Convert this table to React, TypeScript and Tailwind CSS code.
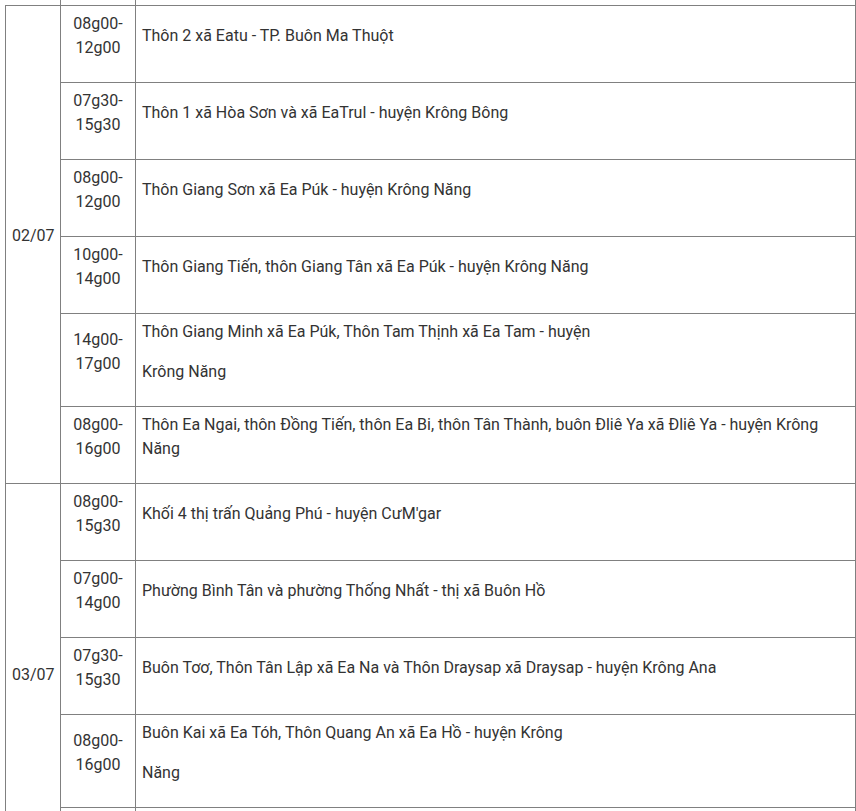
import React from "react";

type Row = { time: [string, string] | null; content: string[][] };

const group1: Row[] = [
  { time: ["08g00-", "12g00"], content: [["Thôn 2 xã Eatu - TP. Buôn Ma Thuột"]] },
  { time: ["07g30-", "15g30"], content: [["Thôn 1 xã Hòa Sơn và xã EaTrul - huyện Krông Bông"]] },
  { time: ["08g00-", "12g00"], content: [["Thôn Giang Sơn xã Ea Púk - huyện Krông Năng"]] },
  { time: ["10g00-", "14g00"], content: [["Thôn Giang Tiến, thôn Giang Tân xã Ea Púk - huyện Krông Năng"]] },
  {
    time: ["14g00-", "17g00"],
    content: [["Thôn Giang Minh xã Ea Púk, Thôn Tam Thịnh xã Ea Tam - huyện"], ["Krông Năng"]],
  },
  {
    time: ["08g00-", "16g00"],
    content: [
      [
        "Thôn Ea Ngai, thôn Đồng Tiến, thôn Ea Bi, thôn Tân Thành, buôn Đliê Ya xã Đliê Ya - huyện Krông",
        "Năng",
      ],
    ],
  },
];

const group2: Row[] = [
  { time: ["08g00-", "15g30"], content: [["Khối 4 thị trấn Quảng Phú - huyện CưM'gar"]] },
  { time: ["07g00-", "14g00"], content: [["Phường Bình Tân và phường Thống Nhất - thị xã Buôn Hồ"]] },
  { time: ["07g30-", "15g30"], content: [["Buôn Tơơ, Thôn Tân Lập xã Ea Na và Thôn Draysap xã Draysap - huyện Krông Ana"]] },
  {
    time: ["08g00-", "16g00"],
    content: [["Buôn Kai xã Ea Tóh, Thôn Quang An xã Ea Hồ - huyện Krông"], ["Năng"]],
  },
  { time: null, content: [] },
];

const cell = "border border-[#808080] px-[6px] py-[6px] align-middle";

function Lines({ lines }: { lines: string[] }) {
  return (
    <p className="mb-4">
      {lines.map((l, i) => (
        <React.Fragment key={i}>
          {i > 0 && <br />}
          {l}
        </React.Fragment>
      ))}
    </p>
  );
}

function Group({ date, rows }: { date: string; rows: Row[] }) {
  return (
    <>
      {rows.map((r, i) => (
        <tr key={i} className={r.time ? "" : "h-[76px]"}>
          {i === 0 && (
            <td rowSpan={rows.length} className={`${cell} text-center`}>
              <p className="mb-4">{date}</p>
            </td>
          )}
          <td className={`${cell} text-center`}>{r.time && <Lines lines={r.time} />}</td>
          <td className={`${cell} text-left`}>
            {r.content.map((p, j) => (
              <Lines key={j} lines={p} />
            ))}
          </td>
        </tr>
      ))}
    </>
  );
}

export default function App() {
  return (
    <div
      className="h-[811px] w-[856px] overflow-hidden bg-white text-[#333333] text-[16px] leading-[24px]"
      style={{ fontFamily: "Roboto, 'Noto Sans', sans-serif" }}
    >
      <table className="ml-[5px] w-[850px] table-fixed border-collapse">
        <colgroup>
          <col className="w-[55px]" />
          <col className="w-[75px]" />
          <col className="w-[720px]" />
        </colgroup>
        <tbody>
          <tr>
            <td className="h-[5px] border-r border-b border-[#808080] p-0"></td>
            <td className="h-[5px] border-r border-b border-[#808080] p-0"></td>
            <td className="h-[5px] border-r border-b border-[#808080] p-0"></td>
          </tr>
          <Group date="02/07" rows={group1} />
          <Group date="03/07" rows={group2} />
        </tbody>
      </table>
    </div>
  );
}
